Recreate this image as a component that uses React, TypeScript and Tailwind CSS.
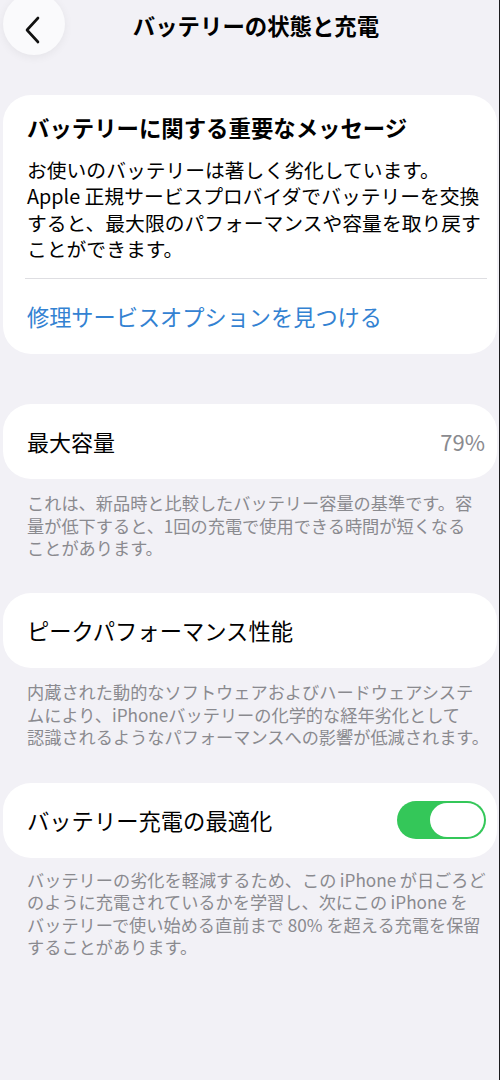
import React from "react";

const Footer = ({ lines, mt }: { lines: React.ReactNode[]; mt: string }) => (
  <div className={`${mt} pl-[27px] text-[17.2px] leading-[22.5px] text-[#8a8a8f] whitespace-nowrap`}>
    {lines.map((l, i) => (
      <div key={i}>{l}</div>
    ))}
  </div>
);

export default function App() {
  return (
    <div className="relative w-[500px] h-[1080px] overflow-hidden bg-[#f2f1f6] border-r border-[#1c1c1e] font-['Noto_Sans_CJK_JP','Noto_Sans',sans-serif] text-black">
      {/* back button */}
      <div className="absolute left-[3px] top-[-7px] w-[62px] h-[62px] rounded-full bg-[#fafafc] shadow-[0_2px_10px_rgba(0,0,0,0.06)] flex items-center justify-center">
        <svg width="18" height="28" viewBox="0 0 18 28" className="mt-[11px] -ml-[2px]">
          <path d="M14 2 L3 14 L14 26" fill="none" stroke="#111" strokeWidth="2.6" strokeLinecap="round" strokeLinejoin="round" />
        </svg>
      </div>

      {/* header */}
      <div className="h-[95px] pt-[10px] pl-[13px] flex justify-center">
        <div className="text-[22.4px] leading-[30px] font-bold">バッテリーの状態と充電</div>
      </div>

      {/* message card */}
      <div className="ml-[3px] mr-[2px] rounded-[28px] bg-white pl-[24px] pr-[10px] pt-[17px] pb-[23px]">
        <div className="text-[22.4px] leading-[30px] font-bold whitespace-nowrap">バッテリーに関する重要なメッセージ</div>
        <div className="mt-[15px] text-[19.8px] leading-[26.4px] whitespace-nowrap">
          <div>お使いのバッテリーは著しく劣化しています。</div>
          <div>Apple 正規サービスプロバイダでバッテリーを交換</div>
          <div>すると、最大限のパフォーマンスや容量を取り戻す</div>
          <div>ことができます。</div>
        </div>
        <div className="mt-[15px] -ml-[2px] h-px bg-[#dedee2]" />
        <div className="mt-[22px] text-[22.2px] leading-[30px] text-[#3382d2] whitespace-nowrap">修理サービスオプションを見つける</div>
      </div>

      {/* max capacity */}
      <div className="mt-[50px] ml-[3px] mr-[2px] h-[75px] rounded-[28px] bg-white pl-[24px] pr-[12px] flex items-center justify-between">
        <div className="text-[22px] leading-[30px]">最大容量</div>
        <div className="text-[22px] leading-[30px] text-[#8a8a8f]">79%</div>
      </div>
      <Footer
        mt="mt-[13.5px]"
        lines={[
          "これは、新品時と比較したバッテリー容量の基準です。容",
          "量が低下すると、1回の充電で使用できる時間が短くなる",
          "ことがあります。",
        ]}
      />

      {/* peak performance */}
      <div className="mt-[33px] ml-[3px] mr-[2px] h-[75px] rounded-[28px] bg-white pl-[24px] pr-[12px] flex items-center">
        <div className="text-[22.3px] leading-[30px]">ピークパフォーマンス性能</div>
      </div>
      <Footer
        mt="mt-[13.5px]"
        lines={[
          "内蔵された動的なソフトウェアおよびハードウェアシステ",
          "ムにより、iPhoneバッテリーの化学的な経年劣化として",
          "認識されるようなパフォーマンスへの影響が低減されます。",
        ]}
      />

      {/* optimized charging */}
      <div className="mt-[34px] ml-[3px] mr-[2px] h-[75px] rounded-[28px] bg-white pl-[24px] pr-[11px] flex items-center justify-between">
        <div className="text-[22.3px] leading-[30px]">バッテリー充電の最適化</div>
        <div className="w-[89px] h-[38px] rounded-full bg-[#34c759] p-[2px] flex justify-end">
          <div className="w-[54px] h-[34px] rounded-full bg-white" />
        </div>
      </div>
      <Footer
        mt="mt-[11px]"
        lines={[
          "バッテリーの劣化を軽減するため、この\u2009iPhone\u2009が日ごろど",
          "のように充電されているかを学習し、次にこの\u2009iPhone\u2009を",
          "バッテリーで使い始める直前まで 80% を超える充電を保留",
          "することがあります。",
        ]}
      />
    </div>
  );
}
